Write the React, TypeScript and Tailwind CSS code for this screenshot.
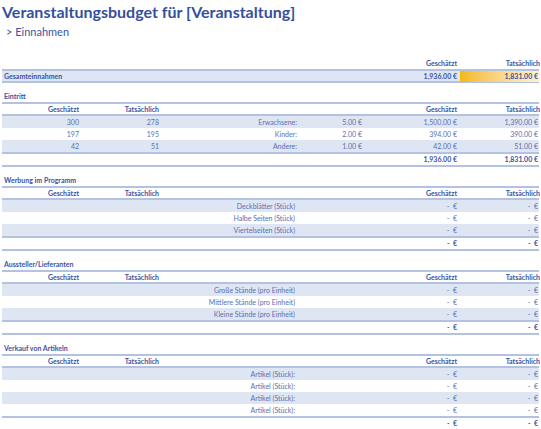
const grid = "grid grid-cols-[80px_80px_138px_65px_95px_80px] h-3 items-center";
const cell = "text-right pr-[3px]";

type Sec = { title: string; counts?: string[][]; labels: string[]; prices?: string[]; est: string[]; act: string[]; tot: string[] };

const sections: Sec[] = [
  {
    title: "Eintritt",
    counts: [["300", "278"], ["197", "195"], ["42", "51"]],
    labels: ["Erwachsene:", "Kinder:", "Andere:"],
    prices: ["5.00 €", "2.00 €", "1.00 €"],
    est: ["1,500.00 €", "394.00 €", "42.00 €"],
    act: ["1,390.00 €", "390.00 €", "51.00 €"],
    tot: ["1,936.00 €", "1,831.00 €"],
  },
  {
    title: "Werbung im Programm",
    labels: ["Deckblätter (Stück)", "Halbe Seiten (Stück)", "Viertelseiten (Stück)"],
    est: ["-  €", "-  €", "-  €"],
    act: ["-  €", "-  €", "-  €"],
    tot: ["-  €", "-  €"],
  },
  {
    title: "Aussteller/Lieferanten",
    labels: ["Große Stände (pro Einheit)", "Mittlere Stände (pro Einheit)", "Kleine Stände (pro Einheit)"],
    est: ["-  €", "-  €", "-  €"],
    act: ["-  €", "-  €", "-  €"],
    tot: ["-  €", "-  €"],
  },
  {
    title: "Verkauf von Artikeln",
    labels: ["Artikel (Stück):", "Artikel (Stück):", "Artikel (Stück):", "Artikel (Stück):"],
    est: ["-  €", "-  €", "-  €", "-  €"],
    act: ["-  €", "-  €", "-  €", "-  €"],
    tot: ["-  €", "-  €"],
  },
];

function Section({ s }: { s: Sec }) {
  return (
    <div className="mt-[7px]">
      <div className="h-3 font-bold leading-3 pl-[2px]">{s.title}</div>
      <div className={`${grid} border-t-2 border-[#b4c2e2] font-bold`}>
        <div className={cell}>Geschätzt</div>
        <div className={cell}>Tatsächlich</div>
        <div /> <div />
        <div className={cell}>Geschätzt</div>
        <div className="text-right">Tatsächlich</div>
      </div>
      <div className="border-t-2 border-[#b4c2e2]">
        {s.labels.map((l, i) => (
          <div key={i} className={`${grid} ${i % 2 === 0 ? "bg-[#dfe6f3]" : ""} text-[#5a6fb0]`}>
            <div className={cell}>{s.counts ? s.counts[i][0] : ""}</div>
            <div className={cell}>{s.counts ? s.counts[i][1] : ""}</div>
            <div className={s.prices ? cell : "col-span-2 text-right pr-[230px] whitespace-nowrap"} style={s.prices ? undefined : { marginRight: -160 }}>{l}</div>
            {s.prices ? <div className={cell}>{s.prices[i]}</div> : null}
            <div className={`${cell} whitespace-pre`}>{s.est[i]}</div>
            <div className="text-right pr-[2px] whitespace-pre">{s.act[i]}</div>
          </div>
        ))}
      </div>
      <div className={`${grid} border-t-2 border-b-2 border-[#b4c2e2] font-bold h-[15px]`}>
        <div /><div /><div /><div />
        <div className={`${cell} whitespace-pre`}>{s.tot[0]}</div>
        <div className="text-right pr-[2px] whitespace-pre">{s.tot[1]}</div>
      </div>
    </div>
  );
}

export default function App() {
  return (
    <div className="w-[541px] h-[429px] overflow-hidden bg-white text-[#3c53a0] text-[7px] px-[2px]" style={{ fontFamily: "Lato, 'Open Sans', sans-serif" }}>
      <div className="text-[16px] font-bold leading-[22px] text-[#34509e] pt-[1px]">Veranstaltungsbudget für [Veranstaltung]</div>
      <div className="text-[11px] leading-[14px] pl-[4px] mt-[2px]">&gt; Einnahmen</div>
      <div className={`${grid} mt-[18px] font-bold`}>
        <div /><div /><div /><div />
        <div className={cell}>Geschätzt</div>
        <div className="text-right">Tatsächlich</div>
      </div>
      <div className={`${grid} h-[14px] bg-[#dfe6f3] border-t-2 border-b-2 border-[#b4c2e2] font-bold`}>
        <div className="col-span-4 pl-[2px]">Gesamteinnahmen</div>
        <div className={cell}>1,936.00 €</div>
        <div className="text-right pr-[2px] h-full flex items-center justify-end bg-gradient-to-r from-[#f5b800] to-[#fdf3d0]">1,831.00 €</div>
      </div>
      {sections.map((s) => <Section key={s.title} s={s} />)}
    </div>
  );
}
